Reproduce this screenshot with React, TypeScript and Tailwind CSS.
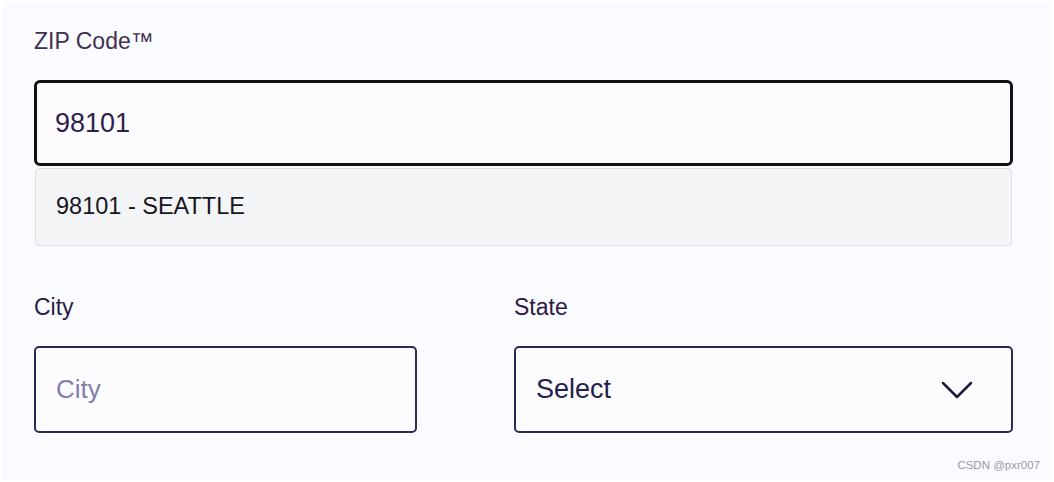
export default function App() {
  return (
    <div
      className="relative w-[1054px] h-[482px] bg-[#fafbfe] border-2 border-white px-[32px] pt-[25px] overflow-hidden"
      style={{ fontFamily: '"Liberation Sans", Arial, sans-serif' }}
    >
      {/* ZIP field */}
      <div className="relative">
        <label className="block text-[23px] leading-[28px] text-[#403052]">ZIP Code™</label>
        <div className="mt-[25px] h-[86px] w-[979px] border-[3px] border-[#111114] rounded-[6px] bg-[#fcfcfe] flex items-center pl-[18px]">
          <span className="text-[27px] text-[#2f1f4f]">98101</span>
        </div>

        {/* suggestion menu */}
        <div className="absolute left-[1px] top-full mt-[2px] w-[977px] h-[78px] bg-[#f3f4f6] border border-[#dedfe4] rounded-[4px] flex items-center pl-[20px]">
          <span className="text-[23.5px] text-[#17141f]">98101 - SEATTLE</span>
        </div>
      </div>

      {/* City / State */}
      <div className="mt-[127px] flex gap-[97px]">
        <div className="w-[383px]">
          <label className="block text-[23px] leading-[28px] text-[#2b1a45]">City</label>
          <div className="mt-[25px] h-[87px] border-2 border-[#2a2a55] rounded-[5px] bg-[#fcfcfe] flex items-center pl-[20px]">
            <span className="text-[26px] text-[#8180ab]">City</span>
          </div>
        </div>
        <div className="w-[499px]">
          <label className="block text-[23px] leading-[28px] text-[#2b1a45]">State</label>
          <div className="mt-[25px] h-[87px] border-2 border-[#2a2a55] rounded-[5px] bg-[#fcfcfe] flex items-center justify-between pl-[20px] pr-[38px]">
            <span className="text-[27px] text-[#25214d]">Select</span>
            <svg width="32" height="18" viewBox="0 0 32 18" fill="none">
              <polyline points="2,2 16,16 30,2" stroke="#1c1a3c" strokeWidth="2.5" strokeLinecap="round" strokeLinejoin="round" />
            </svg>
          </div>
        </div>
      </div>

      <span className="absolute right-[12px] bottom-[6px] text-[11.5px] text-[#9a9a9f]">CSDN @pxr007</span>
    </div>
  );
}
